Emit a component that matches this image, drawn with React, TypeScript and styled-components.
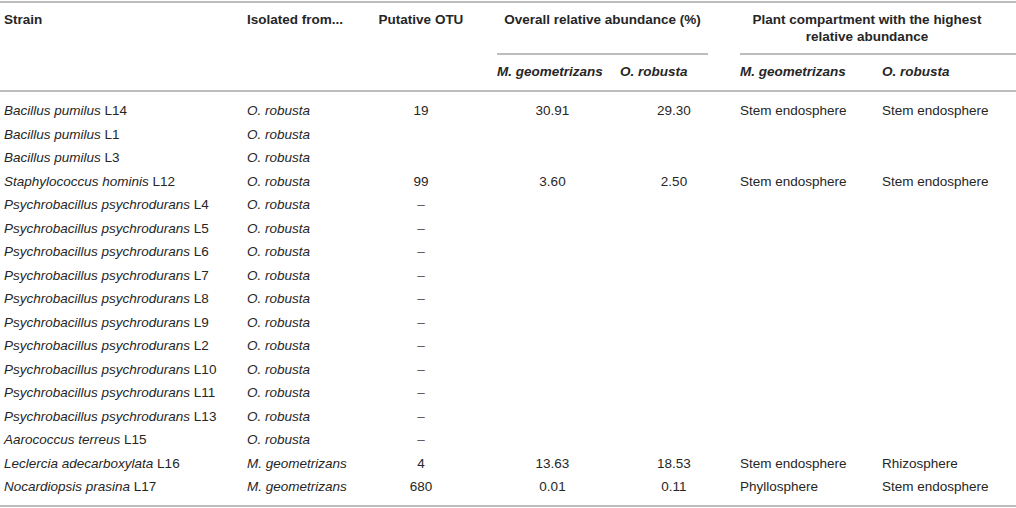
import React from 'react';
import styled, { createGlobalStyle } from 'styled-components';

const GlobalStyle = createGlobalStyle`
    html, body {
        margin: 0;
        padding: 0;
        background: #ffffff;
    }
    body {
        font-family: "Liberation Sans", Arial, Helvetica, sans-serif;
        font-size: 13.5px;
        color: #262626;
    }
`;

const COLUMNS = '240px 111px 140px 123px 120px 142px 140px';
const RULE = '#bdbdbd';

const Table = styled.div`
    width: 1016px;
    margin-top: 1px;
    border-top: 2px solid ${RULE};
    border-bottom: 2px solid ${RULE};
`;

const Head = styled.div`
    display: grid;
    grid-template-columns: ${COLUMNS};
    grid-template-rows: 50px 2px 35px;
    border-bottom: 2px solid ${RULE};
    font-weight: bold;
    line-height: 17px;
`;

const HeadCell = styled.div<{ $center?: boolean; $pad?: number }>`
    grid-row: 1 / 4;
    padding: 8px 0 0 ${p => p.$pad ?? 6}px;
    text-align: ${p => (p.$center ? 'center' : 'left')};
    white-space: nowrap;
`;

const GroupHead = styled.div<{ $col: string; $textRight: number }>`
    grid-row: 1;
    grid-column: ${p => p.$col};
    padding: 8px ${p => p.$textRight}px 0 6px;
    text-align: center;
    white-space: nowrap;
`;

const GroupRule = styled.div<{ $col: string; $lineRight: number }>`
    grid-row: 2;
    grid-column: ${p => p.$col};
    margin: 0 ${p => p.$lineRight}px 0 6px;
    background: ${RULE};
`;

const SubHead = styled.div<{ $col: number }>`
    grid-row: 3;
    grid-column: ${p => p.$col};
    padding: 8px 0 0 6px;
    font-style: italic;
    white-space: nowrap;
`;

const Body = styled.div`
    display: grid;
    grid-template-columns: ${COLUMNS};
    grid-auto-rows: 23.5px;
    padding: 7px 0 6px;
    align-items: center;
`;

const Cell = styled.div<{ $align?: 'left' | 'center'; $pad?: number }>`
    text-align: ${p => p.$align ?? 'left'};
    padding-left: ${p => p.$pad ?? 0}px;
    white-space: nowrap;
    line-height: 17px;
`;

const Dash = styled.span`
    color: #555;
`;

type Row = {
    genus: string;
    strain: string;
    from: string;
    otu?: string;
    mAbund?: string;
    oAbund?: string;
    mPlace?: string;
    oPlace?: string;
};

const PSY = 'Psychrobacillus psychrodurans';

const rows: Row[] = [
    { genus: 'Bacillus pumilus', strain: 'L14', from: 'O. robusta', otu: '19', mAbund: '30.91', oAbund: '29.30', mPlace: 'Stem endosphere', oPlace: 'Stem endosphere' },
    { genus: 'Bacillus pumilus', strain: 'L1', from: 'O. robusta' },
    { genus: 'Bacillus pumilus', strain: 'L3', from: 'O. robusta' },
    { genus: 'Staphylococcus hominis', strain: 'L12', from: 'O. robusta', otu: '99', mAbund: '3.60', oAbund: '2.50', mPlace: 'Stem endosphere', oPlace: 'Stem endosphere' },
    { genus: PSY, strain: 'L4', from: 'O. robusta', otu: '–' },
    { genus: PSY, strain: 'L5', from: 'O. robusta', otu: '–' },
    { genus: PSY, strain: 'L6', from: 'O. robusta', otu: '–' },
    { genus: PSY, strain: 'L7', from: 'O. robusta', otu: '–' },
    { genus: PSY, strain: 'L8', from: 'O. robusta', otu: '–' },
    { genus: PSY, strain: 'L9', from: 'O. robusta', otu: '–' },
    { genus: PSY, strain: 'L2', from: 'O. robusta', otu: '–' },
    { genus: PSY, strain: 'L10', from: 'O. robusta', otu: '–' },
    { genus: PSY, strain: 'L11', from: 'O. robusta', otu: '–' },
    { genus: PSY, strain: 'L13', from: 'O. robusta', otu: '–' },
    { genus: 'Aarococcus terreus', strain: 'L15', from: 'O. robusta', otu: '–' },
    { genus: 'Leclercia adecarboxylata', strain: 'L16', from: 'M. geometrizans', otu: '4', mAbund: '13.63', oAbund: '18.53', mPlace: 'Stem endosphere', oPlace: 'Rhizosphere' },
    { genus: 'Nocardiopsis prasina', strain: 'L17', from: 'M. geometrizans', otu: '680', mAbund: '0.01', oAbund: '0.11', mPlace: 'Phyllosphere', oPlace: 'Stem endosphere' },
];

export default function App() {
    return (
        <>
            <GlobalStyle />
            <Table>
                <Head>
                    <HeadCell $pad={4}>Strain</HeadCell>
                    <HeadCell $pad={7}>Isolated from...</HeadCell>
                    <HeadCell $center $pad={0}>Putative OTU</HeadCell>

                    <GroupHead $col="4 / 6" $textRight={26}>
                        Overall relative abundance (%)
                    </GroupHead>
                    <GroupRule $col="4 / 6" $lineRight={26} />

                    <GroupHead $col="6 / 8" $textRight={22}>
                        Plant compartment with the highest<br />relative abundance
                    </GroupHead>
                    <GroupRule $col="6 / 8" $lineRight={0} />

                    <SubHead $col={4}>M. geometrizans</SubHead>
                    <SubHead $col={5}>O. robusta</SubHead>
                    <SubHead $col={6}>M. geometrizans</SubHead>
                    <SubHead $col={7}>O. robusta</SubHead>
                </Head>

                <Body>
                    {rows.map(r => (
                        <React.Fragment key={r.strain}>
                            <Cell $pad={4}><i>{r.genus}</i> {r.strain}</Cell>
                            <Cell $pad={7}><i>{r.from}</i></Cell>
                            <Cell $align="center">
                                {r.otu === '–' ? <Dash>–</Dash> : r.otu}
                            </Cell>
                            <Cell $align="center">{r.mAbund}</Cell>
                            <Cell $align="center">{r.oAbund}</Cell>
                            <Cell $pad={6}>{r.mPlace}</Cell>
                            <Cell $pad={6}>{r.oPlace}</Cell>
                        </React.Fragment>
                    ))}
                </Body>
            </Table>
        </>
    );
}
